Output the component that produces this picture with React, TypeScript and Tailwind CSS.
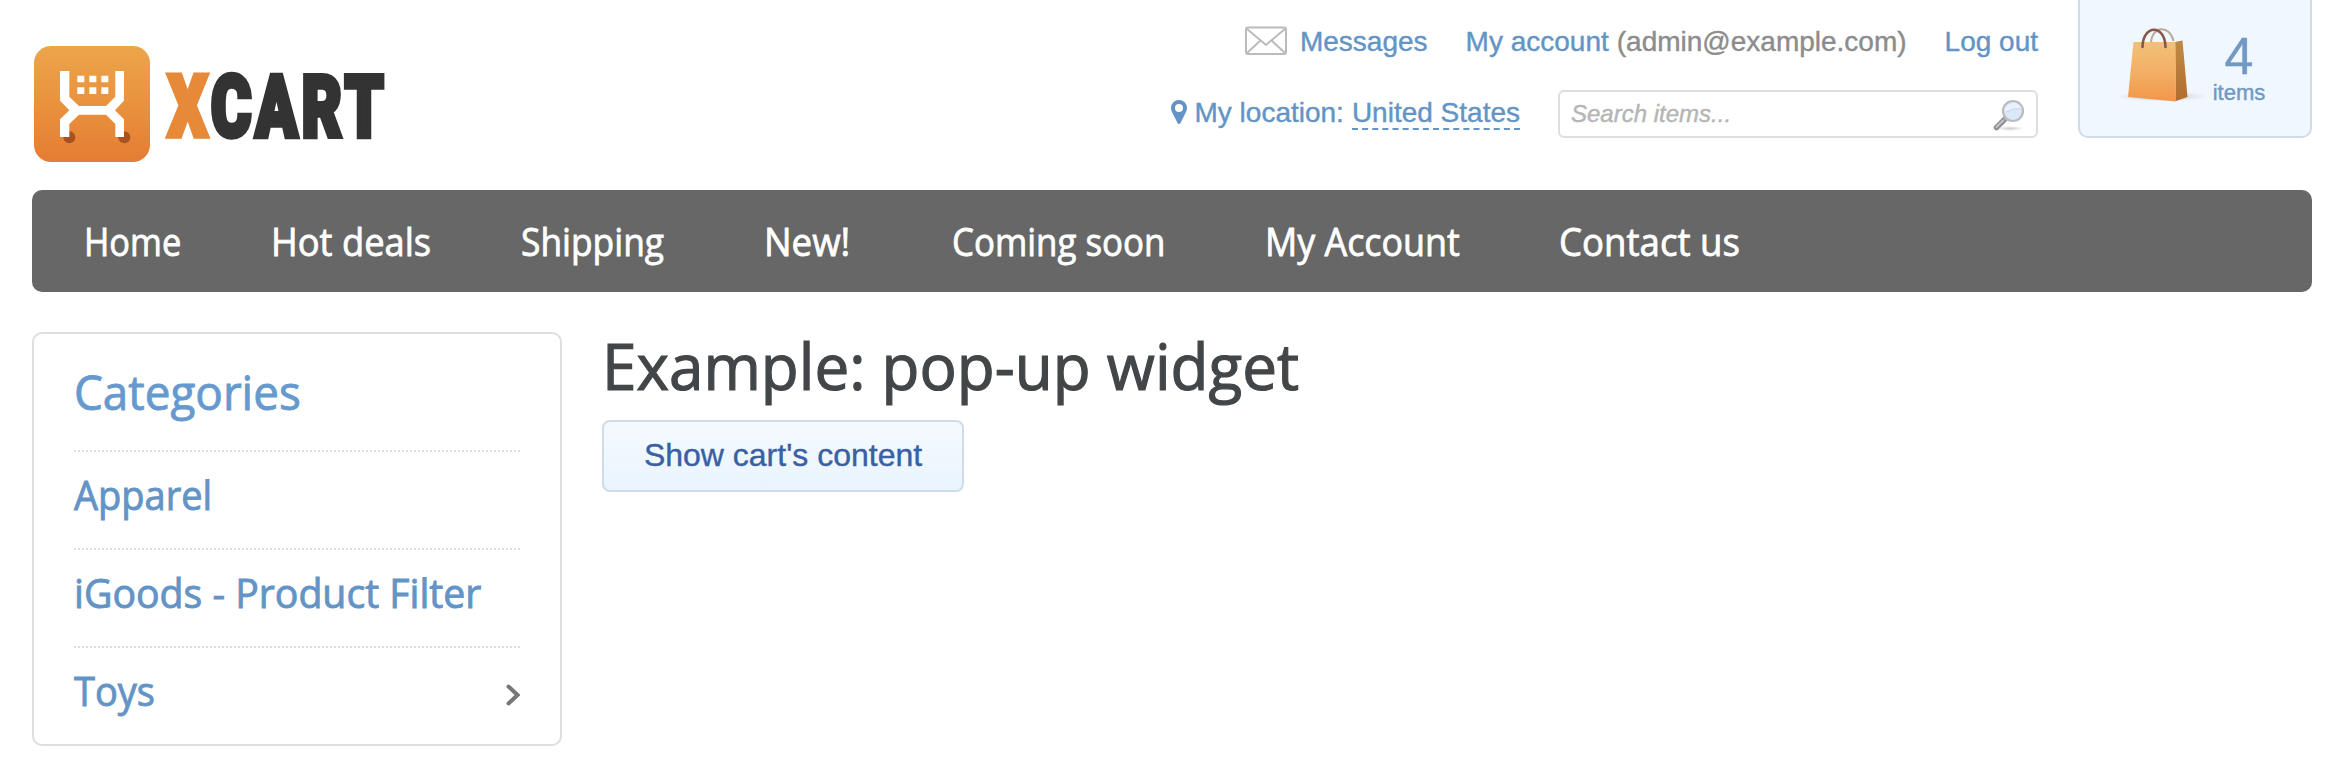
const nav = [
  { label: "Home", box: "ml-[52px] w-[187px]", text: "scale-x-[0.905]" },
  { label: "Hot deals", box: "w-[250px]", text: "scale-x-[0.955]" },
  { label: "Shipping", box: "w-[243px]", text: "scale-x-[0.93]" },
  { label: "New!", box: "w-[188px]", text: "scale-x-[0.965]" },
  { label: "Coming soon", box: "w-[313px]", text: "scale-x-[0.918]" },
  { label: "My Account", box: "w-[294px]", text: "scale-x-[0.943]" },
  { label: "Contact us", box: "w-[240px]", text: "scale-x-[0.963]" },
];

const categories = [
  { label: "Apparel", more: false, text: "scale-x-[0.95]" },
  { label: "iGoods - Product Filter", more: false, text: "scale-x-[0.98]" },
  { label: "Toys", more: true, text: "scale-x-[0.95]" },
];

function Logo() {
  return (
    <svg width="370" height="124" viewBox="0 0 370 124" className="block">
      <defs>
        <linearGradient id="tile" x1="0" y1="0" x2="0" y2="1">
          <stop offset="0" stopColor="#eca54b" />
          <stop offset="0.5" stopColor="#e9923d" />
          <stop offset="1" stopColor="#e57c33" />
        </linearGradient>
      </defs>
      <rect x="2" y="2" width="116" height="116" rx="17" fill="url(#tile)" />
      <g transform="translate(-12 -14) scale(0.3333)">
        <circle cx="148" cy="322" r="18" fill="#a9521f" />
        <circle cx="313" cy="322" r="18" fill="#a9521f" />
        <path
          fill="#fff"
          d="M120 123H148V200L177 228H258L286 200V123H312V212L285 241L312 268V321H286V282L258 254H177L148 282V321H120V268L148 241L120 212Z"
        />
        <path
          fill="#fff"
          d="M172 137h21v20h-21zM208 137h21v20h-21zM244 137h21v20h-21zM172 172h21v20h-21zM208 172h21v20h-21zM244 172h21v20h-21z"
        />
      </g>
      <text
        x="136"
        y="91.5"
        textLength="220"
        lengthAdjust="spacingAndGlyphs"
        letterSpacing="6"
        fontFamily="Roboto, sans-serif"
        fontWeight="900"
        fontSize="86"
        fill="#333"
        stroke="#333"
        strokeWidth="5.5"
      >
        <tspan fill="#e68938" stroke="#e68938">X</tspan>CART
      </text>
    </svg>
  );
}

function Envelope() {
  return (
    <svg width="42" height="30" viewBox="0 0 42 30" fill="none" stroke="#bbb" strokeWidth="2" className="mb-[2px] block">
      <rect x="1" y="1.5" width="40" height="26.5" rx="2" />
      <path d="M2 3L17 15.500L21 19L25 15.500L40 3M2 27L15.500 14.500M40 27L26.500 14.500" />
    </svg>
  );
}

function Pin() {
  return (
    <svg width="16" height="24" viewBox="0 0 16 24" className="mb-1 block">
      <path
        fillRule="evenodd"
        d="M8 0a8 8 0 0 1 8 8c0 2-.7 3.300-1.500 5L9.500 23a1.700 1.700 0 0 1-3 0L1.500 13C.7 11.300 0 10 0 8a8 8 0 0 1 8-8zm0 4a4 4 0 1 0 0 8a4 4 0 0 0 0-8z"
        fill="#6394c5"
      />
    </svg>
  );
}

function Magnifier() {
  return (
    <svg width="34" height="34" viewBox="0 0 34 34" className="mt-[3px] block">
      <defs>
        <radialGradient id="shade">
          <stop offset="0" stopColor="#999" stopOpacity="0.5" />
          <stop offset="1" stopColor="#999" stopOpacity="0" />
        </radialGradient>
      </defs>
      <ellipse cx="18" cy="29.5" rx="14" ry="2.5" fill="url(#shade)" />
      <path d="M4.500 28.500L13 20" stroke="#8f8f93" strokeWidth="5.5" strokeLinecap="round" />
      <path d="M4.500 28L11 21.500" stroke="#c3c3c9" strokeWidth="2" strokeLinecap="round" />
      <path d="M12 21L15.500 17.500" stroke="#aaa" strokeWidth="3" />
      <circle cx="21" cy="12" r="10" fill="#dbe8f8" stroke="#b9bbbf" strokeWidth="2.2" />
      <path d="M12.500 12.500Q20 11 29.500 9A9 9 0 0 0 12.500 12z" fill="#e9f1fb" />
      <path d="M14 13Q21 9.500 28 9.500" fill="none" stroke="#c4dbf6" strokeWidth="1.5" />
    </svg>
  );
}

function Bag() {
  return (
    <svg width="110" height="90" viewBox="0 0 110 90" className="block">
      <defs>
        <linearGradient id="front" x1="0" y1="0" x2="0" y2="1">
          <stop offset="0" stopColor="#f3c078" />
          <stop offset="0.5" stopColor="#f3b064" />
          <stop offset="1" stopColor="#f2964c" />
        </linearGradient>
        <linearGradient id="side" x1="0" y1="0" x2="0" y2="1">
          <stop offset="0" stopColor="#c08a43" />
          <stop offset="1" stopColor="#b16d31" />
        </linearGradient>
        <radialGradient id="floor">
          <stop offset="0" stopColor="#8a8274" stopOpacity="0.4" />
          <stop offset="1" stopColor="#8a8274" stopOpacity="0" />
        </radialGradient>
      </defs>
      <ellipse cx="62" cy="76.5" rx="46" ry="5" fill="url(#floor)" />
      <path d="M51 23C52 5 70 5 73.500 21" fill="none" stroke="#bba99f" strokeWidth="2" />
      <path d="M75 22L82.500 20.500L87.500 77L76 81z" fill="url(#side)" />
      <path d="M33.500 22H75.500L76 81.500L28 77z" fill="url(#front)" />
      <path d="M42.500 27C43 4 65 4 65.500 27" fill="none" stroke="#85594a" strokeWidth="2.6" strokeLinecap="round" />
    </svg>
  );
}

export default function App() {
  return (
    <div className="h-[782px] w-[2338px] overflow-hidden bg-white pl-8 pr-[26px] font-['Liberation_Sans',Arial,sans-serif] text-[28px] leading-8 text-[#6394c5] [-webkit-text-stroke:0.4px]">
      <header className="flex h-[190px] items-start">
        <div className="pt-11">
          <Logo />
        </div>
        <div className="ml-auto flex flex-col items-end">
          <div className="mt-[26px] flex h-8 items-center whitespace-nowrap">
            <Envelope />
            <a className="ml-[13px]">Messages</a>
            <a className="ml-[38px]">My account</a>
            <span className="ml-2 text-[#8c8c8c]">(admin@example.com)</span>
            <a className="ml-[38px]">Log out</a>
          </div>
          <div className="mt-8 flex h-12 items-center whitespace-nowrap">
            <Pin />
            <span className="mb-[2px] ml-[7px]">My location:</span>
            <a className="mb-[2px] ml-2 border-b-2 border-dashed border-[#6394c5] pt-px leading-[31px]">United States</a>
            <div className="ml-[38px] flex h-12 w-[480px] items-center justify-between rounded-md border-2 border-[#dedede] pl-[11px] pr-[10px] text-[24px] italic text-[#b5b5b5]">
              <span>Search items...</span>
              <Magnifier />
            </div>
          </div>
        </div>
        <div className="ml-10 flex h-[138px] w-[234px] rounded-b-[10px] border-2 border-t-0 border-[#cddce8] bg-[#f0f7fe] text-[#7199c3]">
          <div className="ml-5 mt-5">
            <Bag />
          </div>
          <div className="ml-[2px] mt-[30px] flex w-[54px] flex-col items-center">
            <span className="text-[52px] leading-[52px]">4</span>
            <span className="text-[22px] leading-[21px]">items</span>
          </div>
        </div>
      </header>

      <nav className="flex h-[102px] w-[2280px] items-center whitespace-nowrap rounded-[10px] bg-[#676767] font-['Open_Sans',sans-serif] text-[38px] font-medium text-white [-webkit-text-stroke:0.8px]">
        {nav.map((n) => (
          <div key={n.label} className={n.box}>
            <a className={"inline-block origin-left " + n.text}>{n.label}</a>
          </div>
        ))}
      </nav>

      <div className="mt-10 flex items-start font-['Open_Sans',sans-serif] [-webkit-text-stroke:0.9px]">
        <aside className="h-[414px] w-[530px] rounded-[10px] border-2 border-[#dedede] px-10">
          <h2 className="flex h-[116px] items-center pb-px text-[48px] leading-[56px] text-[#669ace]">
            <span className="inline-block origin-left scale-x-[0.955]">Categories</span>
          </h2>
          {categories.map((c) => (
            <div key={c.label} className="flex h-[98px] items-center justify-between border-t-2 border-dotted border-[#dedede] text-[40px]">
              <a className={"mb-[11px] inline-block origin-left whitespace-nowrap " + c.text}>{c.label}</a>
              {c.more && (
                <svg width="14" height="22" viewBox="0 0 14 22" fill="none" stroke="#777" strokeWidth="4" strokeLinecap="round" className="mb-[3px]">
                  <path d="M2.500 2.500L11.500 11L2.500 19.500" />
                </svg>
              )}
            </div>
          ))}
        </aside>
        <main className="ml-10">
          <h1 className="h-[88px] whitespace-nowrap text-[64px] leading-[68px] text-[#434649] [-webkit-text-stroke:1.2px]">
            <span className="inline-block origin-left scale-x-[0.969]">Example: pop-up widget</span>
          </h1>
          <button className="block h-[72px] w-[362px] rounded-[8px] border-2 border-[#cddce8] bg-gradient-to-b from-[#f5faff] to-[#eaf4fe] pb-[2px] font-['Liberation_Sans',Arial,sans-serif] text-[32px] text-[#3a5fa3] [-webkit-text-stroke:0.4px]">
            Show cart's content
          </button>
        </main>
      </div>
    </div>
  );
}
